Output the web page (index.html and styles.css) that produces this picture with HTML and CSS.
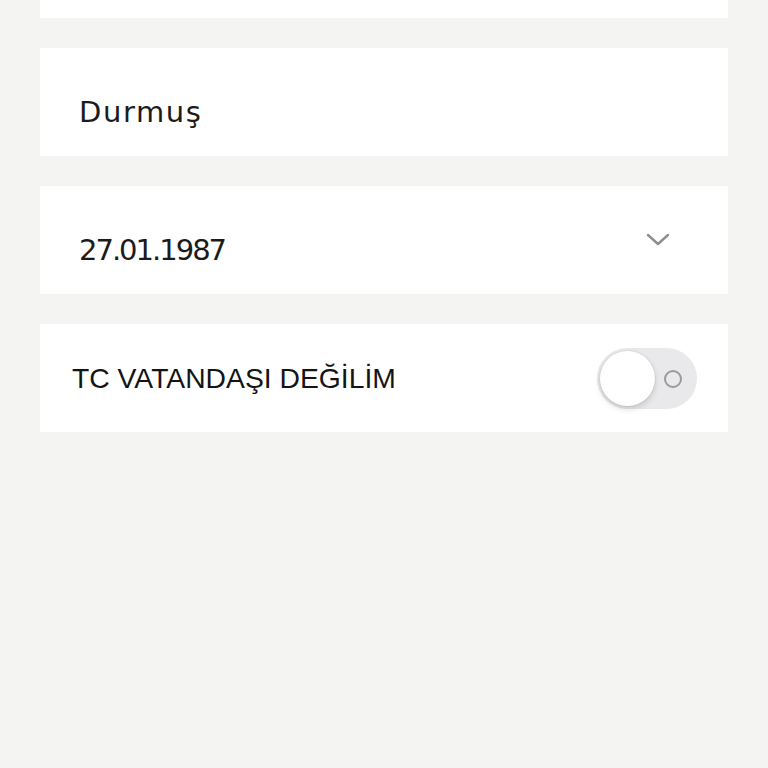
FILE: index.html
```html
<!DOCTYPE html>
<html lang="tr">
<head>
    <meta charset="UTF-8">
    <meta name="viewport" content="width=device-width, initial-scale=1.0">
    <title>Kişisel Bilgiler</title>
    <link rel="stylesheet" href="styles.css">
</head>
<body>
    <section class="form-list">
        <!-- previous field, scrolled out of view -->
        <div class="field"></div>

        <div class="field">
            <span class="field-value">Durmuş</span>
        </div>

        <div class="field">
            <span class="field-value field-date">27.01.1987</span>
            <svg class="chevron" width="24" height="14" viewBox="0 0 24 14">
                <path d="M2 2 L12 11 L22 2" fill="none" stroke="#8e8e90" stroke-width="2.4" stroke-linecap="round" stroke-linejoin="round"/>
            </svg>
        </div>

        <div class="field field-toggle">
            <span class="toggle-label">TC VATANDAŞI DEĞİLİM</span>
            <label class="switch">
                <input type="checkbox">
                <span class="switch-track">
                    <span class="switch-off-mark"></span>
                    <span class="switch-knob"></span>
                </span>
            </label>
        </div>
    </section>
</body>
</html>
```

FILE: styles.css
```css
/* Basic Styles */
body {
    margin: 0;
    padding: 0;
    background-color: #f4f4f2;
    font-family: "DejaVu Sans", Arial, sans-serif;
    color: #1b1b1b;
}

/* list is scrolled, first field partly hidden */
.form-list {
    display: flex;
    flex-direction: column;
    gap: 30px;
    margin: -90px 40px 0;
}

.field {
    height: 108px;
    background-color: #ffffff;
    display: flex;
    align-items: center;
    justify-content: space-between;
    padding: 0 58px 0 39px;
    box-sizing: border-box;
}

.field-value {
    padding-top: 20px;
    font-size: 29px;
    letter-spacing: 1.6px;
}

.field-date {
    letter-spacing: -2px;
}

.chevron {
    display: block;
}

.field-toggle {
    padding: 0 31px 0 32px;
}

.toggle-label {
    font-family: "Liberation Sans", Arial, sans-serif;
    font-size: 28.3px;
    color: #141414;
}

/* iOS style switch */
.switch input {
    display: none;
}

.switch-track {
    position: relative;
    display: block;
    width: 100px;
    height: 61px;
    border-radius: 31px;
    background-color: #e9e9eb;
}

.switch-knob {
    position: absolute;
    top: 3px;
    left: 3px;
    width: 55px;
    height: 55px;
    border-radius: 50%;
    background-color: #ffffff;
    box-shadow: 0 3px 6px rgba(0, 0, 0, 0.15), 0 0 0 1px rgba(0, 0, 0, 0.04);
}

.switch-off-mark {
    position: absolute;
    top: 22px;
    right: 15px;
    width: 14px;
    height: 14px;
    border: 2px solid #9a9a9c;
    border-radius: 50%;
}
```
